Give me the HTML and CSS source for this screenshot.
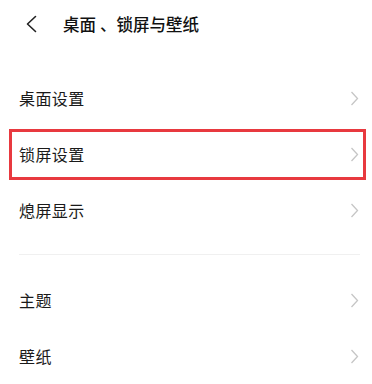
FILE: index.html
```html
<!DOCTYPE html>
<html lang="zh-CN">
<head>
<meta charset="utf-8">
<title>桌面、锁屏与壁纸</title>
<link rel="stylesheet" href="styles.css">
</head>
<body>
<div class="screen">
  <header class="topbar">
    <svg class="back" width="12" height="18" viewBox="0 0 12 18"><path d="M10.5 1.5 L2.5 9 L10.5 16.5" fill="none" stroke="#222" stroke-width="1.6" stroke-linecap="round" stroke-linejoin="round"/></svg>
    <h1 class="title">桌面<span class="dun">、</span>锁屏与壁纸</h1>
  </header>
  <section class="group first">
    <div class="row"><span class="label">桌面设置</span><svg class="chev" width="9" height="15" viewBox="0 0 9 15"><path d="M1.5 1 L7.5 7.5 L1.5 14" fill="none" stroke="#c6c6c6" stroke-width="1.3"/></svg></div>
    <div class="row highlight"><span class="label">锁屏设置</span><svg class="chev" width="9" height="15" viewBox="0 0 9 15"><path d="M1.5 1 L7.5 7.5 L1.5 14" fill="none" stroke="#c6c6c6" stroke-width="1.3"/></svg></div>
    <div class="row"><span class="label">熄屏显示</span><svg class="chev" width="9" height="15" viewBox="0 0 9 15"><path d="M1.5 1 L7.5 7.5 L1.5 14" fill="none" stroke="#c6c6c6" stroke-width="1.3"/></svg></div>
  </section>
  <div class="divider"></div>
  <section class="group">
    <div class="row"><span class="label">主题</span><svg class="chev" width="9" height="15" viewBox="0 0 9 15"><path d="M1.5 1 L7.5 7.5 L1.5 14" fill="none" stroke="#c6c6c6" stroke-width="1.3"/></svg></div>
    <div class="row"><span class="label">壁纸</span><svg class="chev" width="9" height="15" viewBox="0 0 9 15"><path d="M1.5 1 L7.5 7.5 L1.5 14" fill="none" stroke="#c6c6c6" stroke-width="1.3"/></svg></div>
  </section>
</div>
</body>
</html>
```
FILE: styles.css
```css
html, body {
  margin: 0;
  padding: 0;
  background: #ffffff;
}
body {
  font-family: "Noto Sans CJK SC", "Noto Sans", sans-serif;
  color: #1c1c1c;
  width: 372px;
  height: 384px;
  overflow: hidden;
}
.screen {
  display: flex;
  flex-direction: column;
}
.topbar {
  height: 48px;
  display: flex;
  align-items: center;
  padding-left: 25px;
  gap: 26px;
}
.back {
  display: block;
}
.title {
  margin: 0;
  font-size: 16.5px;
  font-weight: 500;
  letter-spacing: 0;
  color: #111;
}
.dun {
  display: inline-block;
  padding-left: 4px;
}
.group.first {
  margin-top: 22px;
}
.row {
  height: 56px;
  display: flex;
  align-items: center;
  justify-content: space-between;
  padding: 0 13px 0 19px;
  position: relative;
}
.label {
  font-size: 16px;
  letter-spacing: 0.4px;
  color: #1a1a1a;
}
.chev {
  display: block;
}
.highlight::after {
  content: "";
  position: absolute;
  left: 9px;
  right: 6px;
  top: 3px;
  bottom: 2px;
  border: 3px solid #e8393f;
}
.divider {
  height: 1px;
  background: #f0f0f0;
  margin: 16px 12px 17px 19px;
}
```
